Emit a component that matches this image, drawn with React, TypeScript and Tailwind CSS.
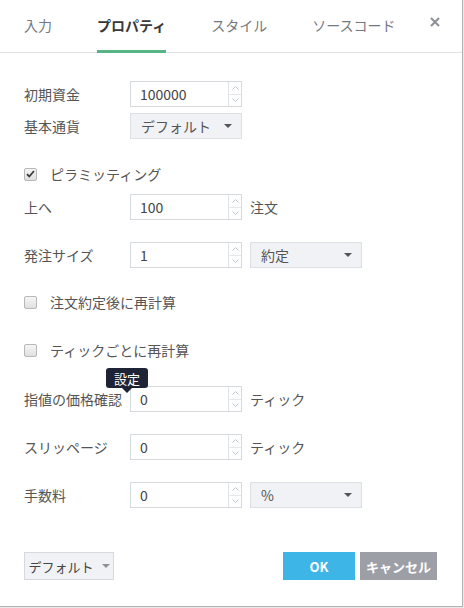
import { ReactNode } from "react";

const font = { fontFamily: '"Noto Sans CJK JP", "Noto Sans", sans-serif' };

function Spinner() {
  return (
    <div className="flex w-[13px] flex-col border-l border-[#dfe2e6]">
      <div className="flex flex-1 items-center justify-center border-b border-[#e6e8eb]">
        <svg width="7" height="4" viewBox="0 0 7 4">
          <path d="M0.5 3.5 L3.5 0.5 L6.5 3.5" fill="none" stroke="#c2c6cd" strokeWidth="1" />
        </svg>
      </div>
      <div className="flex flex-1 items-center justify-center">
        <svg width="7" height="4" viewBox="0 0 7 4">
          <path d="M0.5 0.5 L3.5 3.5 L6.5 0.5" fill="none" stroke="#c2c6cd" strokeWidth="1" />
        </svg>
      </div>
    </div>
  );
}

function NumberInput({ value }: { value: string }) {
  return (
    <div className="flex h-[26px] w-[112px] border border-[#d6d9dd] bg-white">
      <span className="flex flex-1 items-center pl-[9px] text-[14px] leading-none text-[#444]">{value}</span>
      <Spinner />
    </div>
  );
}

function Caret({ color = "#555" }: { color?: string }) {
  return (
    <svg width="8" height="4" viewBox="0 0 8 4">
      <path d="M0 0 L8 0 L4 4 Z" fill={color} />
    </svg>
  );
}

function Select({ value }: { value: string }) {
  return (
    <div className="flex h-[26px] w-[112px] items-center justify-between border border-[#dcdfe4] bg-[#f0f2f5] pl-[10px] pr-[9px]">
      <span className="text-[14px] leading-none text-[#555]">{value}</span>
      <Caret />
    </div>
  );
}

function Checkbox({ checked }: { checked?: boolean }) {
  return (
    <div className="flex h-[13px] w-[13px] items-center justify-center rounded-[2px] border border-[#b8b8b8] bg-gradient-to-b from-[#f5f5f5] to-[#e0e0e0]">
      {checked && (
        <svg width="9" height="8" viewBox="0 0 9 8">
          <path d="M1 4.2 L3.3 6.5 L8 1" fill="none" stroke="#3a3a3a" strokeWidth="1.8" />
        </svg>
      )}
    </div>
  );
}

function Row({ label, children, className = "" }: { label: string; children: ReactNode; className?: string }) {
  return (
    <div className={`relative flex h-[26px] items-center ${className}`}>
      <span className="w-[106px] shrink-0 whitespace-nowrap text-[14px] leading-none text-[#555]">{label}</span>
      <div className="flex items-center gap-[8px]">{children}</div>
    </div>
  );
}

function Unit({ text }: { text: string }) {
  return <span className="text-[14px] leading-none text-[#555]">{text}</span>;
}

function CheckRow({ label, checked, className = "" }: { label: string; checked?: boolean; className?: string }) {
  return (
    <div className={`flex h-[26px] items-center gap-[13px] ${className}`}>
      <Checkbox checked={checked} />
      <span className="text-[14px] leading-none text-[#555]">{label}</span>
    </div>
  );
}

export default function App() {
  const tabs = ["入力", "プロパティ", "スタイル", "ソースコード"];
  return (
    <div className="h-[608px] w-[464px] bg-[#e9e9e9]" style={font}>
      <div className="flex h-[607px] w-[463px] flex-col border-b border-r border-[#b3b3b3] bg-white">
        {/* tabs */}
        <div className="flex h-[53px] shrink-0 items-stretch border-b border-[#e0e2e5] pl-[24px] pr-[22px]">
          <div className="flex gap-[45px]">
            {tabs.map((t, i) => (
              <div
                key={t}
                className={`relative flex items-center pb-[3px] text-[14px] leading-none ${
                  i === 1 ? "font-bold text-[#383838]" : "text-[#74787f]"
                }`}
              >
                {t}
                {i === 1 && <div className="absolute -bottom-[1px] left-0 right-0 h-[3px] bg-[#55b585]" />}
              </div>
            ))}
          </div>
          <div className="ml-auto flex items-center pb-[8px]">
            <svg width="10" height="10" viewBox="0 0 10 10">
              <path d="M1 1 L9 9 M9 1 L1 9" stroke="#8b8f96" strokeWidth="2" />
            </svg>
          </div>
        </div>

        {/* body */}
        <div className="flex flex-col px-[24px] pt-[28px]">
          <Row label="初期資金">
            <NumberInput value="100000" />
          </Row>
          <Row label="基本通貨" className="mt-[6px]">
            <Select value="デフォルト" />
          </Row>

          <CheckRow label="ピラミッティング" checked className="mt-[22px]" />

          <Row label="上へ" className="mt-[7px]">
            <NumberInput value="100" />
            <Unit text="注文" />
          </Row>
          <Row label="発注サイズ" className="mt-[22px]">
            <NumberInput value="1" />
            <Select value="約定" />
          </Row>

          <CheckRow label="注文約定後に再計算" className="mt-[21px]" />
          <CheckRow label="ティックごとに再計算" className="mt-[22px]" />

          <Row label="指値の価格確認" className="mt-[23px]">
            <NumberInput value="0" />
            <Unit text="ティック" />
            <div className="absolute left-[82px] top-[-18px] flex flex-col items-center">
              <div className="flex h-[20px] w-[42px] items-center justify-center rounded-[3px] bg-[#1f2336] text-[13px] leading-none text-white">
                設定
              </div>
              <div className="h-0 w-0 border-x-[5px] border-t-[5px] border-x-transparent border-t-[#1f2336]" />
            </div>
          </Row>
          <Row label="スリッページ" className="mt-[22px]">
            <NumberInput value="0" />
            <Unit text="ティック" />
          </Row>
          <Row label="手数料" className="mt-[22px]">
            <NumberInput value="0" />
            <Select value="%" />
          </Row>

          {/* footer */}
          <div className="mt-[44px] flex items-center">
            <div className="flex h-[28px] w-[90px] items-center justify-center gap-[8px] border border-[#d6d9dd] bg-[#f0f2f5] text-[13px] leading-none text-[#444]">
              デフォルト
              <Caret color="#8c9097" />
            </div>
            <div className="ml-auto flex gap-[5px]">
              <div className="flex h-[28px] w-[72px] items-center justify-center bg-[#3db5e6] text-[13px] font-bold leading-none text-white">
                OK
              </div>
              <div className="flex h-[28px] w-[77px] items-center justify-center bg-[#9c9fa6] text-[13px] font-bold leading-none text-white">
                キャンセル
              </div>
            </div>
            <div className="w-[1px]" />
          </div>
        </div>
      </div>
    </div>
  );
}
